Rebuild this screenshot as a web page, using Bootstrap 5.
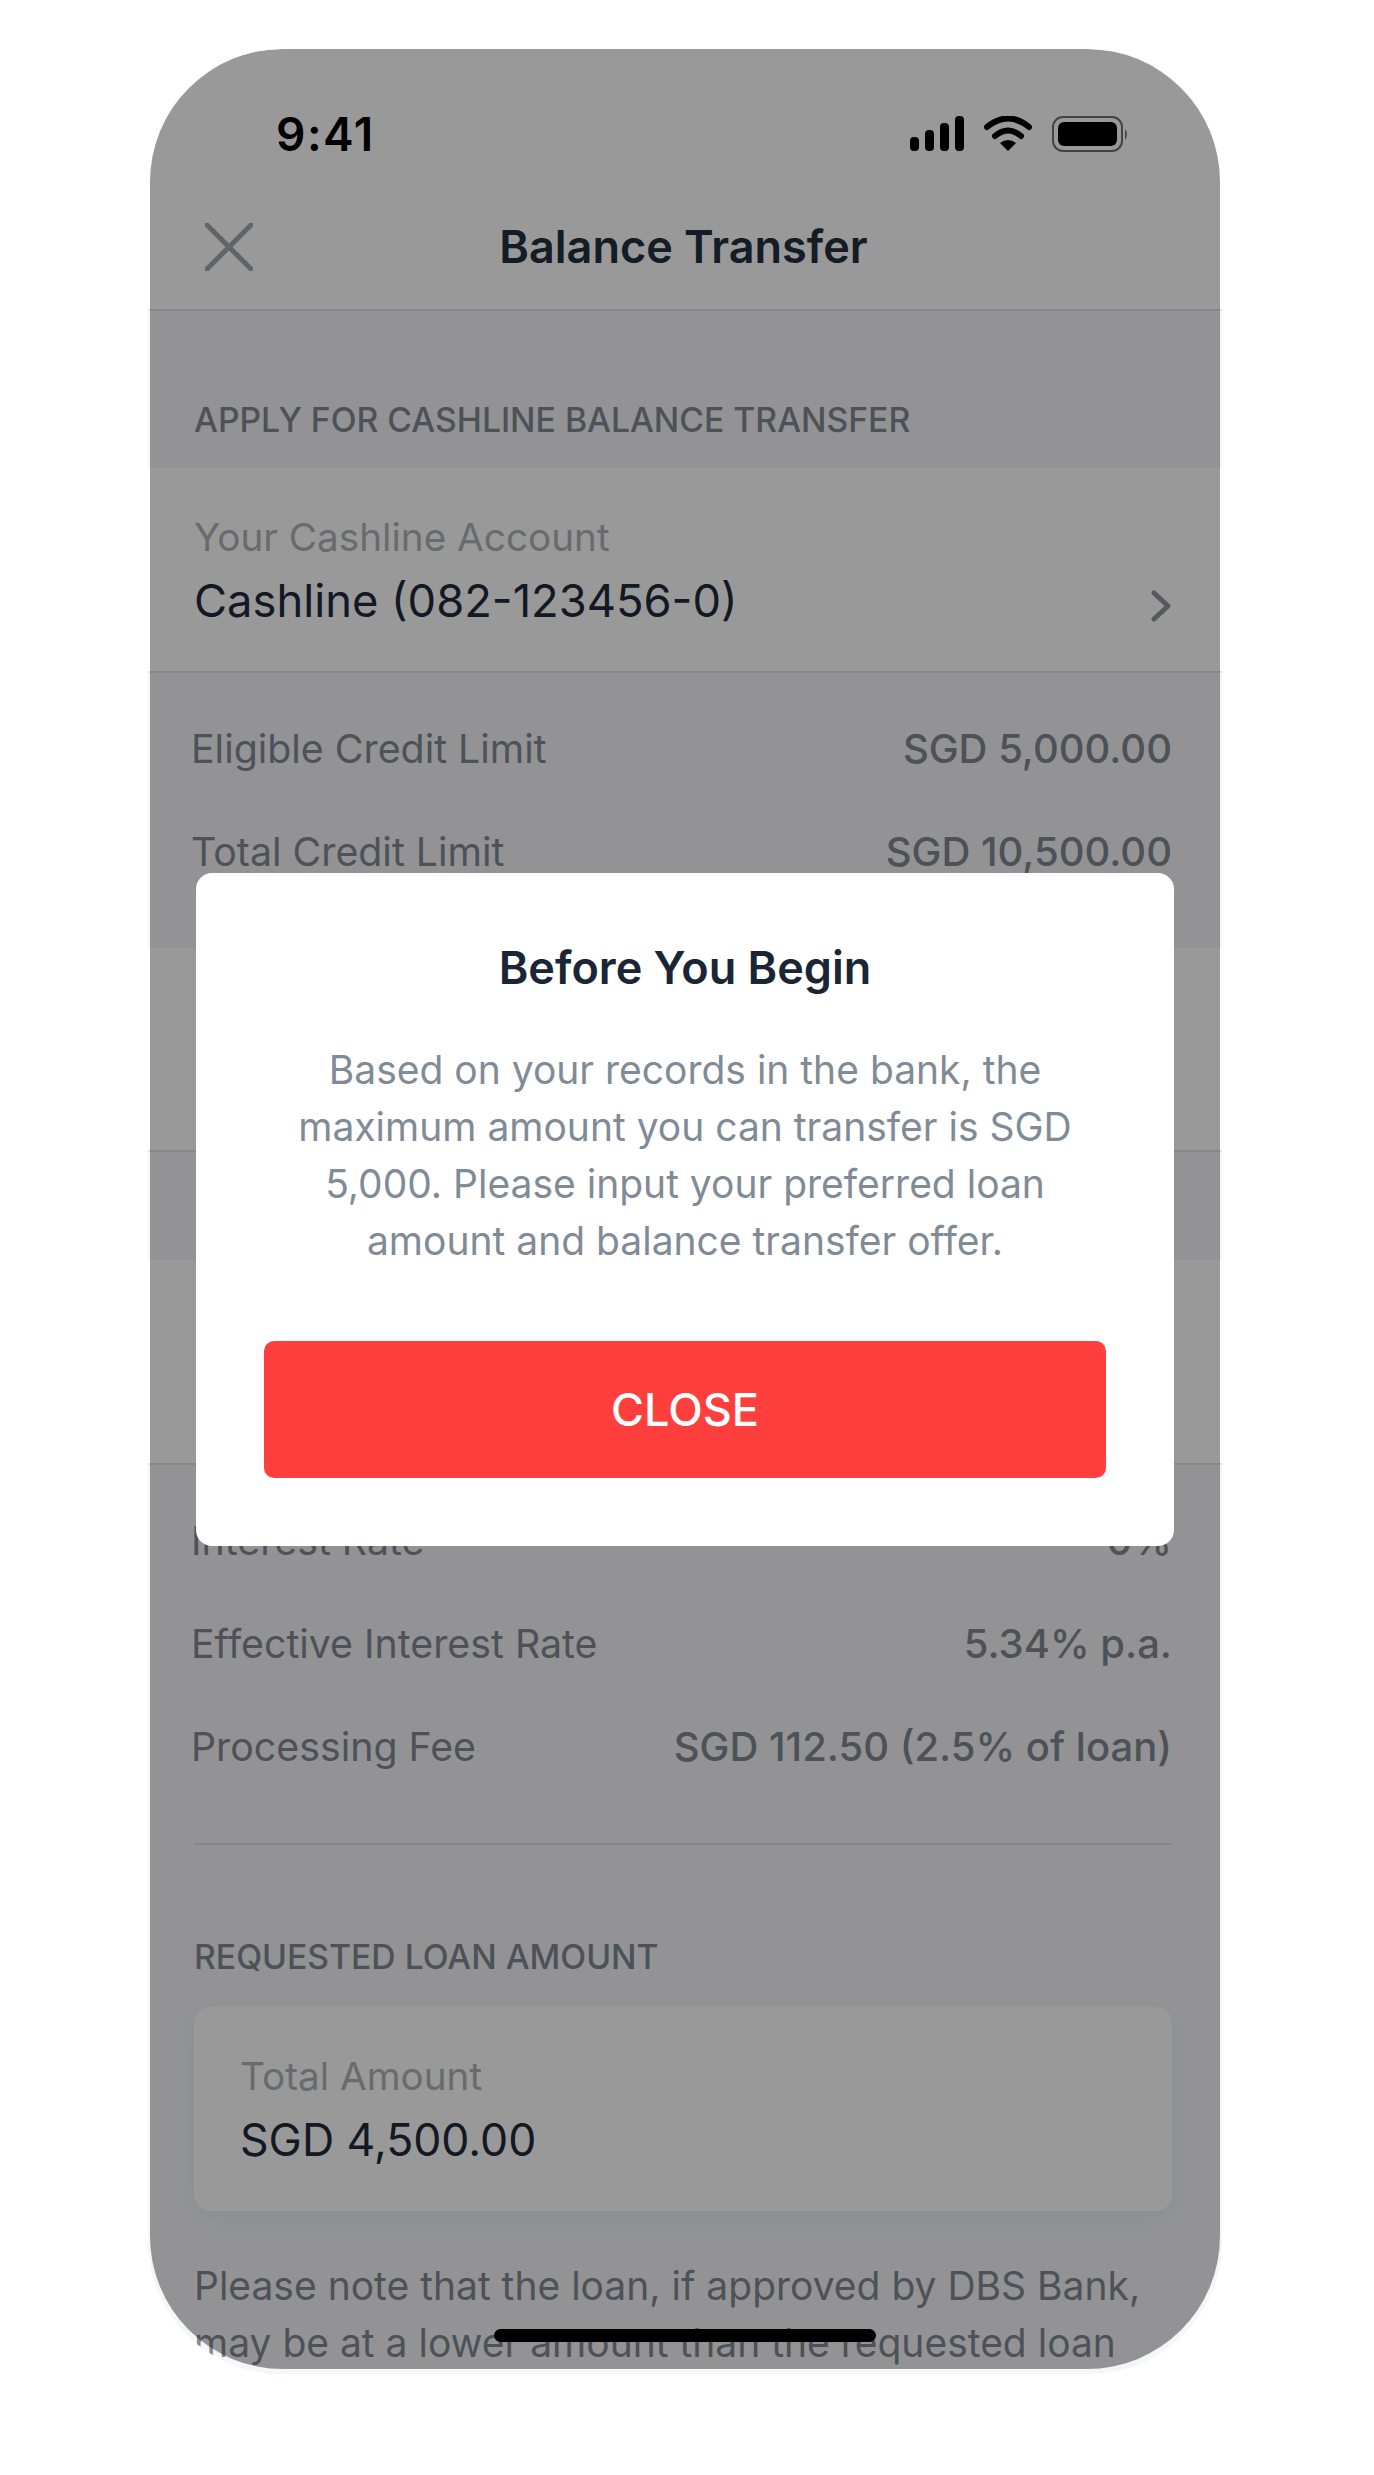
<!DOCTYPE html>
<html lang="en">
<head>
  <meta charset="UTF-8" />
  <meta name="viewport" content="width=device-width, initial-scale=1.0" />
  <title>Balance Transfer</title>
  <link href="https://cdn.jsdelivr.net/npm/bootstrap@5.3.0/dist/css/bootstrap.min.css" rel="stylesheet">
  <style>
    body { background: #fff; font-family: Inter, "Liberation Sans", sans-serif; }
    .device { width: 1074px; height: 2325px; margin: 49px 0 0 148px; background: #f5f6f8; border-radius: 133px; overflow: hidden; }
    .dim { left: 2px; right: 2px; top: 0; bottom: 5px; background: rgba(0,0,0,.4); border-radius: 133px; z-index: 1; }
    .status-bar { height: 141px; padding: 28px 92px 0 128px; background: #fff; }
    .status-bar > * { position: relative; z-index: 2; }
    .clock { font-size: 46px; font-weight: 600; letter-spacing: 1.5px; color: #000; line-height: 1; }
    .top-nav { height: 121px; background: #fff; border-bottom: 2px solid #dfe2e6; padding: 0 49px 5px 46px; }
    .top-nav svg { position: absolute; left: 57px; top: 33px; }
    .nav-title { font-size: 45px; font-weight: 600; color: #22303f; }
    .sec-head { height: 157px; padding: 0 46px 28px; }
    .sec-label { font-size: 33.7px; font-weight: 500; line-height: 40px; color: #7f8993; }
    .white-block { background: #fff; border-bottom: 2px solid #dfe2e6; }
    .acct { height: 205px; padding: 37px 51px 0 46px; }
    .field-label { font-size: 38.7px; line-height: 64px; color: #aeb3b8; }
    .field-value { font-size: 45.3px; line-height: 64px; color: #1e2b3c; }
    .total-box .field-value { font-size: 44.6px; }
    .chevron { margin-top: 36px; }
    .rows { padding: 47px 50px 0 43px; display: flex; flex-direction: column; gap: 46px; }
    .info-row { font-size: 39.3px; line-height: 57px; color: #7f8993; }
    .info-row b { font-weight: 500; font-size: 40px; }
    .rows-a { height: 275px; }
    .blank-a { height: 204px; }
    .blank-gap { height: 108px; }
    .blank-b { height: 205px; }
    .rule { height: 2px; margin: 68px 50px 0 46px; background: #dfe2e6; }
    .req-label { margin: 92px 46px 0; }
    .total-box { margin: 30px 50px 0 46px; height: 204px; padding: 37px 46px 0; background: #fff; border-radius: 16px; box-shadow: 0 6px 24px rgba(0,0,0,.05); }
    .note { margin: 46px 46px 0; font-size: 39px; line-height: 57px; color: #7f8993; }
    .home-bar { left: 346px; width: 382px; bottom: 32px; height: 13px; background: #000; border-radius: 7px; z-index: 2; }
    .dialog { left: 48px; top: 824px; width: 978px; height: 673px; background: #fff; border-radius: 16px; z-index: 3; padding: 64px 68px 0; }
    .dialog-title { font-size: 45px; font-weight: 600; line-height: 62px; color: #1a2636; margin: 0; }
    .dialog-body { font-size: 39px; line-height: 57px; color: #7f8b97; margin: 42px 0 0; }
    .btn-close-red { margin-top: 72px; height: 137px; background: #ff3e3e; color: #fff; border: 0; border-radius: 10px; font-size: 45px; font-weight: 500; }
  </style>
</head>
<body>
  <div class="device position-relative">
    <div class="dim position-absolute"></div>

    <div class="status-bar d-flex justify-content-between align-items-center">
      <span class="clock">9:41</span>
      <svg width="220" height="36" viewBox="0 0 220 36">
        <rect x="0" y="21" width="9" height="14" rx="4"/>
        <rect x="15" y="14" width="9" height="21" rx="4"/>
        <rect x="30" y="7" width="9" height="28" rx="4"/>
        <rect x="45" y="0" width="9" height="35" rx="4"/>
        <path d="M77 11Q98 -6 119 11M85 20Q98 9 111 20" fill="none" stroke="#000" stroke-width="6" stroke-linecap="round"/>
        <path d="M90 27Q98 21 106 27L98 35Z"/>
        <rect x="143" y="1" width="69" height="34" rx="10" fill="none" stroke="#444" stroke-width="2"/>
        <rect x="148" y="6" width="59" height="24" rx="6"/>
        <path d="M215 13Q219 18 215 24Z" fill="#444"/>
      </svg>
    </div>

    <div class="top-nav position-relative d-flex justify-content-center align-items-center">
      <svg width="48" height="48" viewBox="0 0 48 48"><path d="M2 2L46 46M46 2L2 46" fill="none" stroke="#a2a8ae" stroke-width="5" stroke-linecap="round"/></svg>
      <span class="nav-title">Balance Transfer</span>
    </div>

    <div class="sec-head d-flex align-items-end"><span class="sec-label">APPLY FOR CASHLINE BALANCE TRANSFER</span></div>

    <div class="white-block acct d-flex justify-content-between align-items-center">
      <div class="align-self-start">
        <div class="field-label">Your Cashline Account</div>
        <div class="field-value">Cashline (082-123456-0)</div>
      </div>
      <svg class="chevron" width="20" height="32" viewBox="0 0 20 32"><path d="M3 3L17 16L3 29" fill="none" stroke="#8f979f" stroke-width="5" stroke-linecap="round" stroke-linejoin="round"/></svg>
    </div>

    <div class="rows rows-a">
      <div class="info-row d-flex justify-content-between"><span>Eligible Credit Limit</span><b>SGD 5,000.00</b></div>
      <div class="info-row d-flex justify-content-between"><span>Total Credit Limit</span><b>SGD 10,500.00</b></div>
    </div>

    <div class="white-block blank-a"></div>
    <div class="blank-gap"></div>
    <div class="white-block blank-b"></div>

    <div class="rows">
      <div class="info-row d-flex justify-content-between"><span>Interest Rate</span><b>0%</b></div>
      <div class="info-row d-flex justify-content-between"><span>Effective Interest Rate</span><b>5.34% p.a.</b></div>
      <div class="info-row d-flex justify-content-between"><span>Processing Fee</span><b>SGD 112.50 (2.5% of loan)</b></div>
    </div>

    <div class="rule"></div>
    <div class="req-label sec-label">REQUESTED LOAN AMOUNT</div>
    <div class="total-box">
      <div class="field-label">Total Amount</div>
      <div class="field-value">SGD 4,500.00</div>
    </div>
    <p class="note">Please note that the loan, if approved by DBS Bank, may be at a lower amount than the requested loan</p>

    <div class="home-bar position-absolute"></div>

    <div class="dialog position-absolute text-center">
      <h5 class="dialog-title">Before You Begin</h5>
      <p class="dialog-body">Based on your records in the bank, the maximum amount you can transfer is SGD 5,000. Please input your preferred loan amount and balance transfer offer.</p>
      <button class="btn btn-close-red w-100" type="button">CLOSE</button>
    </div>
  </div>
</body>
</html>
